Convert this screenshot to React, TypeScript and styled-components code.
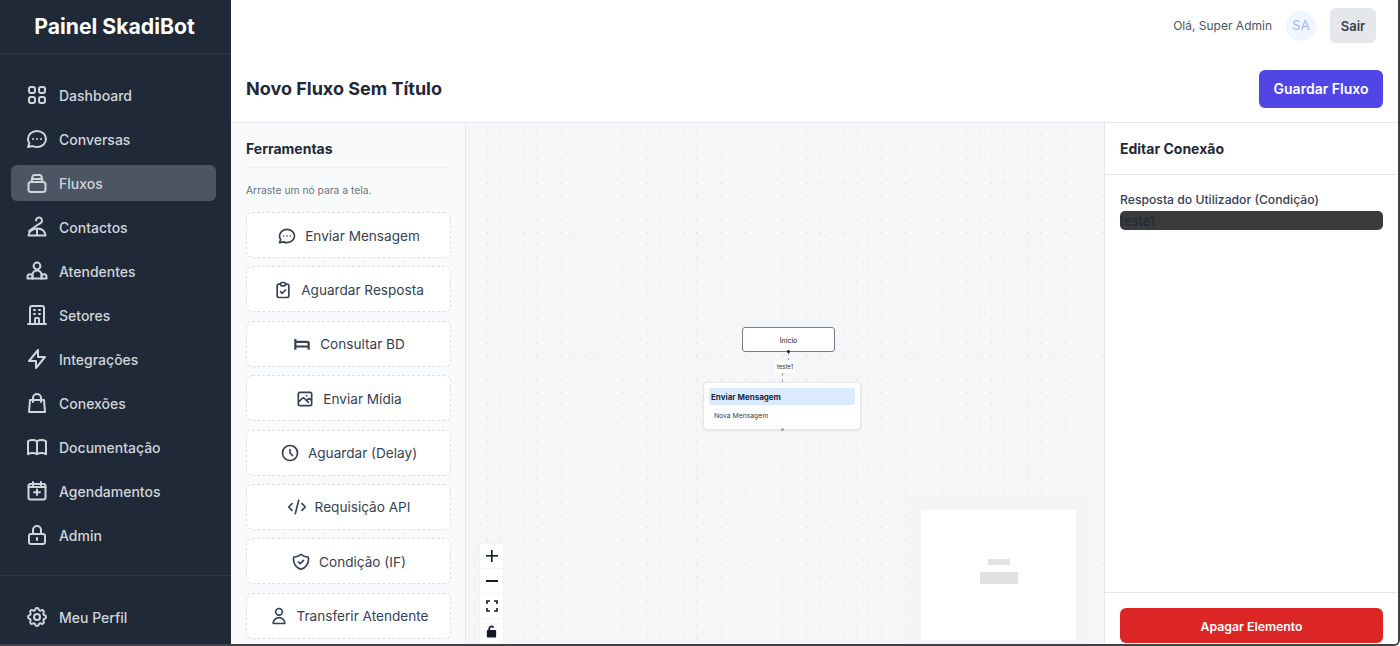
import { ReactNode } from "react";
import styled, { createGlobalStyle } from "styled-components";
import {
  HiOutlineViewGrid,
  HiOutlineChat,
  HiOutlineOfficeBuilding,
  HiOutlineLightningBolt,
  HiOutlineShoppingBag,
  HiOutlineBookOpen,
  HiOutlineLockClosed,
  HiOutlineCog,
  HiOutlinePhotograph,
  HiOutlineClock,
  HiOutlineCode,
  HiOutlineShieldCheck,
  HiOutlineUser,
  HiOutlineClipboardCheck,
} from "react-icons/hi";

const GlobalStyle = createGlobalStyle`
  html, body {
    margin: 0;
    padding: 0;
    height: 100%;
    overflow: hidden;
    background: #ffffff;
    font-family: Inter, "Noto Sans", sans-serif;
  }
  * { box-sizing: border-box; }
`;

const Svg = ({ size = 24, children }: { size?: number; children: ReactNode }) => (
  <svg
    width={size}
    height={size}
    viewBox="0 0 24 24"
    fill="none"
    stroke="currentColor"
    strokeWidth={2}
    strokeLinecap="round"
    strokeLinejoin="round"
  >
    {children}
  </svg>
);

const FluxosIcon = () => (
  <Svg>
    <rect x="3.5" y="11" width="17" height="10" rx="2.5" />
    <path d="M6.5 11l1-5.5A2 2 0 0 1 9.5 4h5a2 2 0 0 1 2 1.5l1 5.5" />
    <path d="M7 8h10" />
  </Svg>
);

const ContactosIcon = () => (
  <Svg>
    <path d="M11 5.5a3 3 0 1 1 4.5 2.6c-1 .6-2 1-3.5 2.2L4 16" />
    <path d="M3.5 20.5h17c0-4-3.5-7-8-7-4.5 0-9 3-9 7z" />
    <path d="M12 14v6" />
  </Svg>
);

const AtendentesIcon = () => (
  <Svg>
    <circle cx="12" cy="7" r="3.4" />
    <path d="M7.5 19.5V16a4.5 4.5 0 0 1 9 0v3.5" />
    <path d="M7.5 19.5h9" />
    <path d="M7.5 19.5H2.5V18a2.5 2.5 0 0 1 5-.5M16.5 19.5h5V18a2.5 2.5 0 0 0-5-.5" />
  </Svg>
);

const AgendaIcon = () => (
  <Svg>
    <rect x="3.5" y="5" width="17" height="15.5" rx="2" />
    <path d="M8 3v3.5M16 3v3.5M3.5 8h17" />
    <path d="M12 10.5v5.5M9 13.2h6" />
  </Svg>
);

const BedIcon = () => (
  <Svg size={20}>
    <g strokeWidth={2.6} strokeLinecap="butt">
      <path d="M4 6v13M20 9.5V19M4 9.5h14a2 2 0 0 1 2 2V15H4" />
    </g>
  </Svg>
);

const FitGlyph = () => (
  <svg width="12" height="12" viewBox="0 0 12 12" fill="none" stroke="#111827" strokeWidth="1.6">
    <path d="M1 4V1h3M8 1h3v3M11 8v3H8M4 11H1V8" />
  </svg>
);

const LockOpenGlyph = () => (
  <svg width="13" height="13" viewBox="0 0 14 14" fill="#111827">
    <rect x="2" y="5.5" width="10" height="8" rx="1" />
    <path d="M4.5 6V4a2.5 2.5 0 0 1 4.7-1.2" fill="none" stroke="#111827" strokeWidth="1.8" />
  </svg>
);

const navItems: { label: string; icon: ReactNode; active?: boolean }[] = [
  { label: "Dashboard", icon: <HiOutlineViewGrid size={24} /> },
  { label: "Conversas", icon: <HiOutlineChat size={24} /> },
  { label: "Fluxos", icon: <FluxosIcon />, active: true },
  { label: "Contactos", icon: <ContactosIcon /> },
  { label: "Atendentes", icon: <AtendentesIcon /> },
  { label: "Setores", icon: <HiOutlineOfficeBuilding size={24} /> },
  { label: "Integrações", icon: <HiOutlineLightningBolt size={24} /> },
  { label: "Conexões", icon: <HiOutlineShoppingBag size={24} /> },
  { label: "Documentação", icon: <HiOutlineBookOpen size={24} /> },
  { label: "Agendamentos", icon: <AgendaIcon /> },
  { label: "Admin", icon: <HiOutlineLockClosed size={24} /> },
];

const tools: { label: string; icon: ReactNode }[] = [
  { label: "Enviar Mensagem", icon: <HiOutlineChat size={20} /> },
  { label: "Aguardar Resposta", icon: <HiOutlineClipboardCheck size={20} /> },
  { label: "Consultar BD", icon: <BedIcon /> },
  { label: "Enviar Mídia", icon: <HiOutlinePhotograph size={20} /> },
  { label: "Aguardar (Delay)", icon: <HiOutlineClock size={20} /> },
  { label: "Requisição API", icon: <HiOutlineCode size={20} /> },
  { label: "Condição (IF)", icon: <HiOutlineShieldCheck size={20} /> },
  { label: "Transferir Atendente", icon: <HiOutlineUser size={20} /> },
];

export default function App() {
  return (
    <>
      <GlobalStyle />
      <Shell>
        <Sidebar>
          <Brand>Painel SkadiBot</Brand>
          <Nav>
            {navItems.map((item) => (
              <NavItem key={item.label} $active={item.active}>
                {item.icon}
                <span>{item.label}</span>
              </NavItem>
            ))}
          </Nav>
          <SidebarFooter>
            <NavItem>
              <HiOutlineCog size={24} />
              <span>Meu Perfil</span>
            </NavItem>
          </SidebarFooter>
        </Sidebar>
        <Main>
          <TopBar>
            <Greeting>Olá, Super Admin</Greeting>
            <Avatar>SA</Avatar>
            <LogoutButton>Sair</LogoutButton>
          </TopBar>
          <TitleRow>
            <PageTitle>Novo Fluxo Sem Título</PageTitle>
            <SaveButton>Guardar Fluxo</SaveButton>
          </TitleRow>
          <Workspace>
            <ToolsPanel>
              <ToolsTitle>Ferramentas</ToolsTitle>
              <ToolsHint>Arraste um nó para a tela.</ToolsHint>
              <ToolList>
                {tools.map((tool) => (
                  <ToolItem key={tool.label}>
                    {tool.icon}
                    <span>{tool.label}</span>
                  </ToolItem>
                ))}
              </ToolList>
            </ToolsPanel>
            <Canvas>
              <StartNode>Início</StartNode>
              <EdgeSegment $x={322} $y={229} $h={9} />
              <EdgeSegment $x={316} $y={250} $h={9} />
              <EdgeDot $x={321} $y={227} $dark />
              <EdgeLabel>teste1</EdgeLabel>
              <MessageNode>
                <MessageHead>Enviar Mensagem</MessageHead>
                <MessageBody>Nova Mensagem</MessageBody>
              </MessageNode>
              <EdgeDot $x={315} $y={305} />
              <Controls>
                <ControlButton>
                  <PlusGlyph />
                </ControlButton>
                <ControlButton>
                  <MinusGlyph />
                </ControlButton>
                <ControlButton>
                  <FitGlyph />
                </ControlButton>
                <ControlButton>
                  <LockOpenGlyph />
                </ControlButton>
              </Controls>
              <MiniMap>
                <MiniTop />
                <MiniBottom />
              </MiniMap>
            </Canvas>
            <EditPanel>
              <EditHeader>Editar Conexão</EditHeader>
              <EditBody>
                <FieldLabel>Resposta do Utilizador (Condição)</FieldLabel>
                <FieldInput>teste1</FieldInput>
              </EditBody>
              <EditFooter>
                <DeleteButton>Apagar Elemento</DeleteButton>
              </EditFooter>
            </EditPanel>
          </Workspace>
        </Main>
      </Shell>
    </>
  );
}

const Shell = styled.div`
  width: 1400px;
  height: 646px;
  display: flex;
  overflow: hidden;
  background: #ffffff;
  border-right: 2px solid #3f4145;
  border-bottom: 2px solid #3f4145;
  border-bottom-right-radius: 6px;
`;

const Sidebar = styled.aside`
  width: 231px;
  flex-shrink: 0;
  background: #1f2937;
  display: flex;
  flex-direction: column;
  color: #d1d5db;
`;

const Brand = styled.div`
  height: 54px;
  flex-shrink: 0;
  display: flex;
  align-items: center;
  justify-content: center;
  padding: 0 2px 1px 0;
  border-bottom: 1px solid #2d3745;
  color: #ffffff;
  font-size: 21.2px;
  font-weight: 700;
`;

const Nav = styled.nav`
  flex: 1;
  padding: 23px 15px 0 11px;
  display: flex;
  flex-direction: column;
  gap: 8px;
`;

const NavItem = styled.div<{ $active?: boolean }>`
  height: 36px;
  display: flex;
  align-items: center;
  gap: 10px;
  padding-left: 14px;
  border-radius: 6px;
  background: ${(p) => (p.$active ? "#4b5563" : "transparent")};
  font-size: 14px;
  font-weight: 500;
  color: #d1d5db;

  svg {
    flex-shrink: 0;
  }
`;

const SidebarFooter = styled.div`
  height: 69px;
  flex-shrink: 0;
  border-top: 1px solid #2d3745;
  padding: 23px 15px 0 11px;
`;

const Main = styled.main`
  flex: 1;
  min-width: 0;
  display: flex;
  flex-direction: column;
`;

const TopBar = styled.header`
  height: 53px;
  flex-shrink: 0;
  display: flex;
  align-items: center;
  justify-content: flex-end;
  padding: 0 22px 2px 0;
`;

const Greeting = styled.span`
  font-size: 12px;
  color: #4b5563;
  margin-right: 14px;
`;

const Avatar = styled.div`
  width: 30px;
  height: 30px;
  border-radius: 50%;
  background: #eff6ff;
  color: #a5b4fc;
  font-size: 13px;
  display: flex;
  align-items: center;
  justify-content: center;
  padding-bottom: 2px;
  margin-right: 14px;
`;

const LogoutButton = styled.button`
  width: 46px;
  height: 35px;
  border: 0;
  border-radius: 6px;
  background: #e5e7eb;
  color: #374151;
  font: 600 13px Inter, sans-serif;
`;

const TitleRow = styled.div`
  height: 70px;
  flex-shrink: 0;
  display: flex;
  align-items: center;
  justify-content: space-between;
  padding: 2px 15px 0 15px;
  border-bottom: 1px solid #e5e7eb;
`;

const PageTitle = styled.h1`
  margin: 0;
  font-size: 18px;
  font-weight: 700;
  color: #1f2937;
`;

const SaveButton = styled.button`
  width: 124px;
  height: 38px;
  border: 0;
  border-radius: 6px;
  background: #4f46e5;
  color: #ffffff;
  font: 600 14px Inter, sans-serif;
`;

const Workspace = styled.div`
  flex: 1;
  min-height: 0;
  display: flex;
`;

const ToolsPanel = styled.section`
  width: 235px;
  flex-shrink: 0;
  background: #f9fafb;
  border-right: 1px solid #e5e7eb;
  padding: 0 14px 0 15px;
  overflow: hidden;
`;

const ToolsTitle = styled.h3`
  margin: 0;
  height: 45px;
  display: flex;
  align-items: center;
  padding-top: 6px;
  font-size: 14px;
  font-weight: 700;
  color: #1f2937;
  border-bottom: 1px solid #f0f1f3;
`;

const ToolsHint = styled.p`
  margin: 16px 0 15px;
  font-size: 10.3px;
  line-height: 13px;
  color: #6b7280;
`;

const ToolList = styled.div`
  display: flex;
  flex-direction: column;
  gap: 8.4px;
`;

const ToolItem = styled.div`
  height: 46px;
  flex-shrink: 0;
  display: flex;
  align-items: center;
  justify-content: center;
  gap: 8px;
  padding-top: 1px;
  background: #ffffff;
  border: 1px dashed #dcdfe3;
  border-radius: 6px;
  font-size: 13.6px;
  color: #374151;
`;

const Canvas = styled.section`
  position: relative;
  flex: 1;
  min-width: 0;
  overflow: hidden;
  background-color: #f5f6f7;
  background-image: radial-gradient(#c8cbd0 0.6px, transparent 0.6px);
  background-size: 12.3px 12.3px;
  background-position: 3px 5px;
`;

const StartNode = styled.div`
  position: absolute;
  left: 276px;
  top: 204px;
  width: 93px;
  height: 25px;
  padding-top: 1px;
  background: #ffffff;
  border: 1px solid #777d87;
  border-radius: 3px;
  display: flex;
  align-items: center;
  justify-content: center;
  font-size: 7px;
  color: #222222;
`;

const EdgeSegment = styled.div<{ $x: number; $y: number; $h: number }>`
  position: absolute;
  left: ${(p) => p.$x}px;
  top: ${(p) => p.$y}px;
  height: ${(p) => p.$h}px;
  border-left: 1px dashed #9ca3af;
`;

const EdgeDot = styled.div<{ $x: number; $y: number; $dark?: boolean }>`
  position: absolute;
  left: ${(p) => p.$x}px;
  top: ${(p) => p.$y}px;
  width: 3px;
  height: 3px;
  border-radius: 50%;
  background: ${(p) => (p.$dark ? "#111827" : "#9ca3af")};
`;

const EdgeLabel = styled.div`
  position: absolute;
  left: 309px;
  top: 237px;
  width: 20px;
  height: 13px;
  background: #ffffff;
  font-size: 6px;
  display: flex;
  align-items: center;
  justify-content: center;
  color: #333333;
`;

const MessageNode = styled.div`
  position: absolute;
  left: 237px;
  top: 259px;
  width: 158px;
  height: 48px;
  background: #ffffff;
  border: 1px solid #e5e7eb;
  border-radius: 4px;
  box-shadow: 0 1px 2px rgba(0, 0, 0, 0.08);
  padding: 5px;
`;

const MessageHead = styled.div`
  height: 17px;
  background: #dbeafe;
  border-radius: 2px;
  padding-left: 2px;
  display: flex;
  align-items: center;
  font-size: 8px;
  font-weight: 700;
  color: #1f2937;
`;

const MessageBody = styled.div`
  margin-top: 6px;
  padding-left: 5px;
  font-size: 6.8px;
  color: #374151;
`;

const Controls = styled.div`
  position: absolute;
  left: 14px;
  top: 421px;
  width: 23px;
  display: flex;
  flex-direction: column;
  box-shadow: 0 0 2px rgba(0, 0, 0, 0.06);
`;

const ControlButton = styled.div`
  height: 25px;
  background: #fefefe;
  border-bottom: 1px solid #f4f4f4;
  display: flex;
  align-items: center;
  justify-content: center;
`;

const PlusGlyph = styled.span`
  width: 12px;
  height: 12px;
  background:
    linear-gradient(#111827, #111827) center / 12px 1.6px no-repeat,
    linear-gradient(#111827, #111827) center / 1.6px 12px no-repeat;
`;

const MinusGlyph = styled.span`
  width: 12px;
  height: 1.6px;
  background: #111827;
`;

const MiniMap = styled.div`
  position: absolute;
  left: 455px;
  top: 387px;
  width: 155px;
  height: 130px;
  background: #ffffff;
  box-shadow: 0 0 0 12px #f4f5f6;
  display: flex;
  flex-direction: column;
  align-items: center;
  padding-top: 49px;
  gap: 7px;
`;

const MiniTop = styled.div`
  width: 22px;
  height: 6px;
  background: #e2e2e2;
`;

const MiniBottom = styled.div`
  width: 38px;
  height: 12px;
  background: #e2e2e2;
`;

const EditPanel = styled.section`
  width: 294px;
  flex-shrink: 0;
  background: #ffffff;
  border-left: 1px solid #e5e7eb;
  display: flex;
  flex-direction: column;
`;

const EditHeader = styled.div`
  height: 52px;
  flex-shrink: 0;
  display: flex;
  align-items: center;
  padding-left: 15px;
  border-bottom: 1px solid #e5e7eb;
  font-size: 14px;
  font-weight: 700;
  color: #1f2937;
`;

const EditBody = styled.div`
  flex: 1;
  padding: 16px 15px 0;
`;

const FieldLabel = styled.div`
  font-size: 12.2px;
  font-weight: 500;
  line-height: 17px;
  color: #374151;
  margin-bottom: 3px;
`;

const FieldInput = styled.div`
  height: 19px;
  border-radius: 5px;
  background: #3b3b3b;
  color: #1f2937;
  font-size: 13px;
  line-height: 20px;
`;

const EditFooter = styled.div`
  height: 52px;
  flex-shrink: 0;
  border-top: 1px solid #e5e7eb;
  padding: 15px 15px 0;
`;

const DeleteButton = styled.button`
  width: 100%;
  height: 35px;
  padding-top: 2px;
  border: 0;
  border-radius: 6px;
  background: #dc2626;
  color: #ffffff;
  font: 600 12.3px Inter, sans-serif;
`;
